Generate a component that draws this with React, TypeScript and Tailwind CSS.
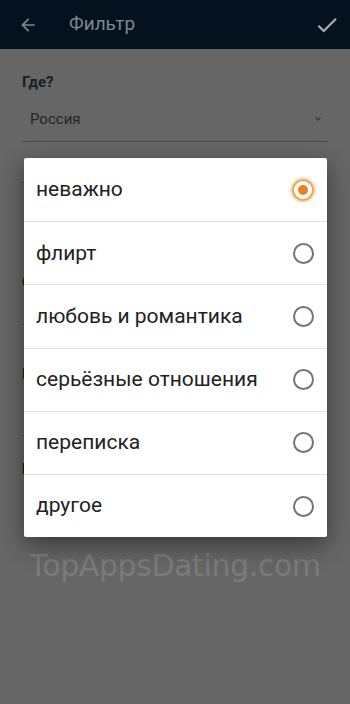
import { useState } from 'react';

const options = [
  'неважно',
  'флирт',
  'любовь и романтика',
  'серьёзные отношения',
  'переписка',
  'другое',
];

const Radio = ({ checked }: { checked: boolean }) => {
  if (checked) {
    return (
      <span className="flex h-[22px] w-[22px] items-center justify-center rounded-full border-2 border-[#efa65a] shadow-[0_0_0_2px_#fbe3c8]">
        <span className="h-[10px] w-[10px] rounded-full bg-[#ec7f22]" />
      </span>
    );
  }
  return <span className="block h-[21px] w-[21px] rounded-full border-2 border-[#747474]" />;
};

const App = () => {
  const [selected, setSelected] = useState(0);

  return (
    <div className="relative h-[704px] w-[350px] overflow-hidden bg-[#666666] font-['Roboto',sans-serif]">
      <header className="flex h-[49px] items-center bg-[#04111f] pl-[18px] pr-[10px]">
        <svg width="20" height="20" viewBox="0 0 24 24" className="text-[#7d8793]">
          <path d="M20 11H7.83l5.59-5.59L12 4l-8 8 8 8 1.41-1.41L7.83 13H20v-2z" fill="currentColor" />
        </svg>
        <span className="ml-[31px] text-[19px] text-[#7d8793]">Фильтр</span>
        <svg width="26" height="26" viewBox="0 0 24 24" className="ml-auto text-[#a9adb2]">
          <path d="M9 16.2L4.8 12l-1.4 1.4L9 19 21 7l-1.4-1.4L9 16.2z" fill="currentColor" />
        </svg>
      </header>

      <div className="px-[22px] pt-[22px]">
        <p className="text-[15px] font-bold text-[#1c1c1c]">Где?</p>
        <div className="mt-[14px] flex items-center border-b border-[#4a4a4a] pb-[11px] pl-[8px] pr-[4px]">
          <span className="text-[15px] text-[#242424]">Россия</span>
          <svg width="12" height="12" viewBox="0 0 24 24" className="ml-auto text-[#3a3a3a]">
            <path d="M7 9l5 5 5-5" stroke="currentColor" strokeWidth="2.5" fill="none" />
          </svg>
        </div>
        <div className="mt-[40px] border-b border-[#4a4a4a]" />
        <p className="mt-[88px] text-[15px] font-bold text-[#1c1c1c]">С кем?</p>
        <div className="mt-[30px] border-b border-[#4a4a4a]" />
        <p className="mt-[38px] text-[15px] font-bold text-[#1c1c1c]">Возраст</p>
        <div className="mt-[50px] border-b border-[#4a4a4a]" />
        <p className="mt-[22px] text-[15px] font-bold text-[#1c1c1c]">Цель</p>
      </div>

      <div className="absolute left-0 right-0 top-[543px] text-center font-['DejaVu_Sans',sans-serif] text-[30px] tracking-[-0.4px] text-[#7b7b7b]">
        TopAppsDating.com
      </div>

      <div className="absolute left-[24px] top-[158px] w-[303px] rounded-[2px] bg-white shadow-[0_8px_24px_rgba(0,0,0,0.45)]">
        {options.map((option, i) => (
          <button
            key={option}
            onClick={() => setSelected(i)}
            className={`flex h-[63.2px] w-full items-center pl-[12px] pr-[12px] text-left ${
              i > 0 ? 'border-t border-[#e2e2e2]' : ''
            }`}
          >
            <span className="text-[21px] text-[#222222]">{option}</span>
            <span className="ml-auto flex w-[24px] justify-center">
              <Radio checked={selected === i} />
            </span>
          </button>
        ))}
      </div>
    </div>
  );
};

export default App;
